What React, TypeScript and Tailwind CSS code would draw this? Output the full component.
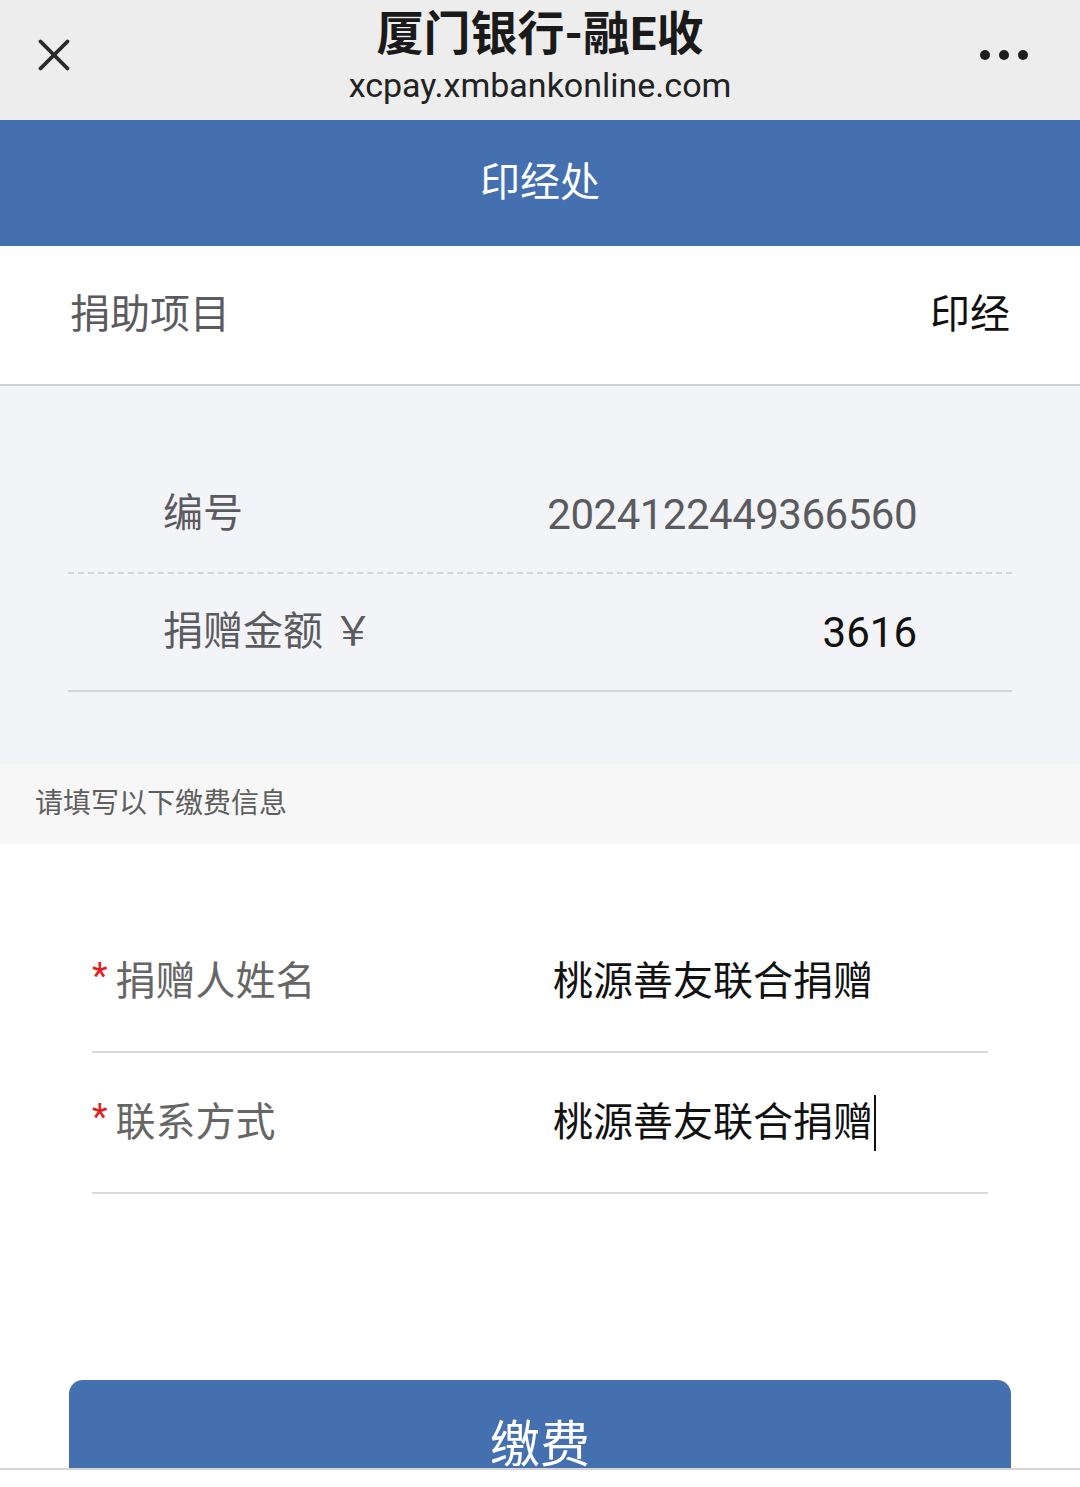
import { X } from 'lucide-react'

const FONT = 'font-["Roboto","Noto_Sans_CJK_SC",sans-serif]'

function InfoRow({ label, value, valueClass }: { label: string; value: string; valueClass: string }) {
  return (
    <div className="flex h-[116px] items-center justify-between px-[95px]">
      <span className="text-[40px] text-[#5b5b5f]">{label}</span>
      <span className={`text-[42px] ${valueClass}`}>{value}</span>
    </div>
  )
}

function FormRow({ label, value, cursor }: { label: string; value: string; cursor?: boolean }) {
  return (
    <div className="mx-[92px] flex h-[141px] items-center border-b-2 border-[#d9d9d9]">
      <div className="flex w-[461px] items-center">
        <span className="mr-[8px] -mt-[12px] text-[36px] leading-none text-[#e02020]">*</span>
        <span className="text-[40px] text-[#666]">{label}</span>
      </div>
      <div className="flex items-center text-[40px] text-[#111]">
        {value}
        {cursor && <span className="ml-[1px] h-[56px] w-[2px] bg-[#111]" />}
      </div>
    </div>
  )
}

export default function App() {
  return (
    <div className={`${FONT} flex h-[1487px] w-[1080px] flex-col bg-white`}>
      <div className="h-[1468px] overflow-hidden">
        {/* Browser top bar */}
        <div className="relative flex h-[120px] flex-col items-center bg-[#ededed]">
          <X className="absolute left-[27px] top-[28px] text-[#2a2a2a]" size={54} strokeWidth={1.7} />
          <div className="mt-[3px] text-[47px] font-bold leading-[62px] text-[#1a1a1a]">厦门银行-融E收</div>
          <div className="text-[34px] leading-[40px] text-[#222]">xcpay.xmbankonline.com</div>
          <div className="absolute right-[52px] top-[50px] flex gap-[9px]">
            <span className="h-[10px] w-[10px] rounded-full bg-[#1f1f1f]" />
            <span className="h-[10px] w-[10px] rounded-full bg-[#1f1f1f]" />
            <span className="h-[10px] w-[10px] rounded-full bg-[#1f1f1f]" />
          </div>
        </div>

        {/* Page header */}
        <div className="flex h-[126px] items-center justify-center bg-[#4470b0] text-[40px] text-white">印经处</div>

        {/* Project */}
        <div className="flex h-[140px] items-center justify-between border-b-2 border-[#cfcfd2] px-[70px]">
          <span className="text-[40px] text-[#5b5b5f]">捐助项目</span>
          <span className="text-[40px] text-[#111]">印经</span>
        </div>

        {/* Bill info */}
        <div className="bg-[#f3f4f8] pt-[70px] pb-[72px]">
          <div className="mx-[68px] border-b-2 border-dashed border-[#d6d6da]">
            <InfoRow label="编号" value="2024122449366560" valueClass="text-[#5b5b5f] tracking-[-0.5px]" />
          </div>
          <div className="mx-[68px] border-b-2 border-[#d2d2d6]">
            <InfoRow label="捐赠金额 ￥" value="3616" valueClass="text-[#111]" />
          </div>
        </div>

        <div className="flex h-[80px] items-center bg-[#f7f7f8] px-[35px] text-[28px] text-[#5e5e5e]">请填写以下缴费信息</div>

        {/* Form */}
        <div className="pt-[68px]">
          <FormRow label="捐赠人姓名" value="桃源善友联合捐赠" />
          <FormRow label="联系方式" value="桃源善友联合捐赠" cursor />
        </div>

        <div className="px-[69px] pt-[186px]">
          <button className="flex h-[130px] w-full items-center justify-center rounded-[14px] bg-[#4470b0] text-[50px] text-white">缴费</button>
        </div>
      </div>
      <div className="flex-1 border-t-2 border-[#d5d5d5] bg-white" />
    </div>
  )
}
